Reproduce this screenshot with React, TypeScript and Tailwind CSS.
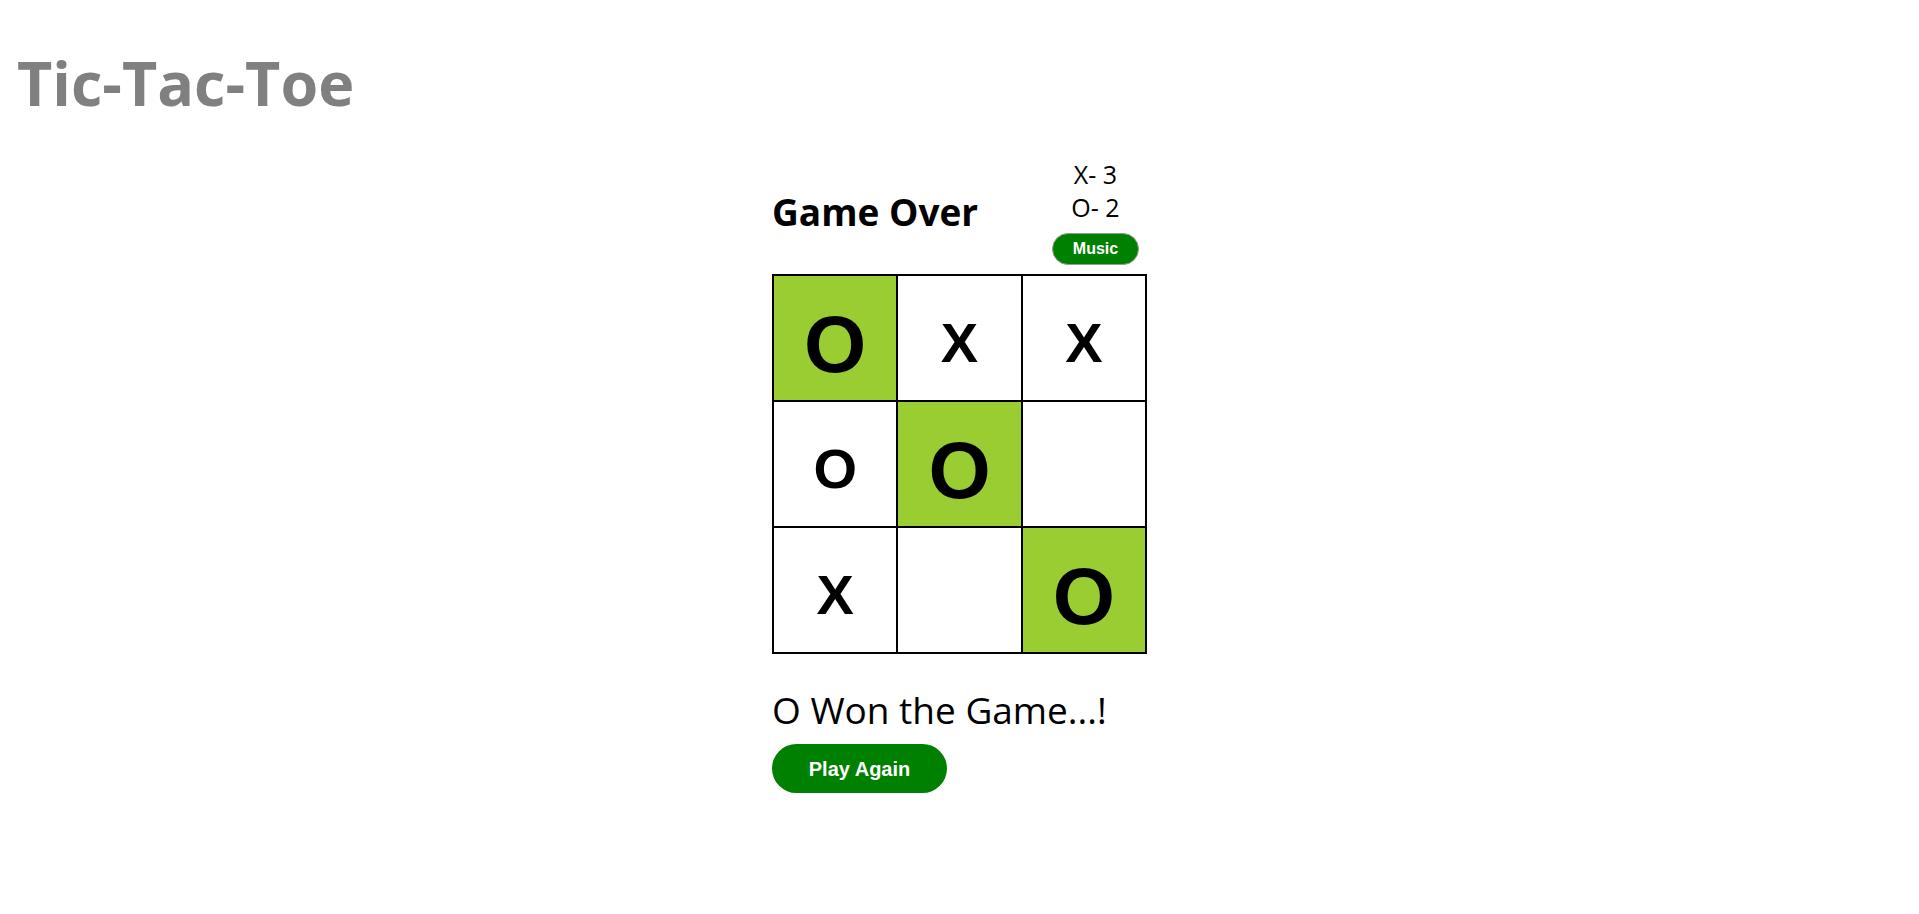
import React from "react";

const cells: { v: string; win: boolean }[] = [
  { v: "O", win: true },
  { v: "X", win: false },
  { v: "X", win: false },
  { v: "O", win: false },
  { v: "O", win: true },
  { v: "", win: false },
  { v: "X", win: false },
  { v: "", win: false },
  { v: "O", win: true },
];

export default function App() {
  return (
    <div className="min-h-screen bg-white" style={{ fontFamily: '"Open Sans", "Noto Sans", sans-serif' }}>
      <h1 className="pl-[17px] pt-[38px] text-[61px] font-bold leading-[90px] text-[#808080]">Tic-Tac-Toe</h1>
      <div className="flex justify-center pt-[30px]">
        <div className="w-[375px]">
          <div className="flex items-center justify-between">
            <h2 className="text-[37px] font-bold leading-[48px] text-black">Game Over</h2>
            <div className="flex w-[103px] flex-col items-center">
              <div className="text-[25px] leading-[33px] text-black">X- 3</div>
              <div className="text-[25px] leading-[33px] text-black">O- 2</div>
              <button
                className="mt-[9px] h-[32px] w-[87px] rounded-full border border-[#999] bg-[#008000] text-[16px] font-bold text-white"
                style={{ fontFamily: '"Liberation Sans", Arial, sans-serif' }}
              >
                Music
              </button>
            </div>
          </div>
          <div
            className="mt-[9px] grid w-[375px] grid-cols-3 border border-black"
            style={{ fontFamily: '"Liberation Sans", Arial, sans-serif' }}
          >
            {cells.map((c, i) => (
              <div
                key={i}
                className={`flex h-[126px] items-center justify-center border border-black font-bold text-black ${
                  c.win ? "bg-[#9acd32] pt-[13px] text-[80px]" : "bg-white pt-[10px] text-[56px]"
                }`}
              >
                {c.v}
              </div>
            ))}
          </div>
          <p className="mt-[32px] text-[37px] leading-[48px] text-black">O Won the Game...!</p>
          <button
            className="mt-[10px] h-[49px] w-[175px] rounded-full bg-[#008000] text-[20px] font-bold text-white"
            style={{ fontFamily: '"Liberation Sans", Arial, sans-serif' }}
          >
            Play Again
          </button>
        </div>
      </div>
    </div>
  );
}
